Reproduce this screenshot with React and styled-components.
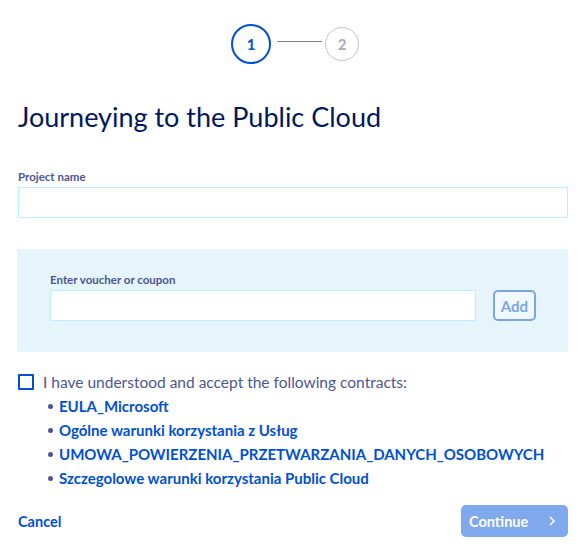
import React from "react";
import styled, { createGlobalStyle } from "styled-components";

const Global = createGlobalStyle`
  html, body { margin: 0; padding: 0; background: #fff; }
  body { font-family: Lato, "Noto Sans", sans-serif; }
  * { box-sizing: border-box; }
`;

const Page = styled.div`
  width: 578px;
  padding: 23px 10px 0 18px;
  display: flex;
  flex-direction: column;
`;

const Stepper = styled.div`
  display: flex;
  align-items: center;
  justify-content: center;
  padding-left: 4px;
  height: 41px;
`;

const Step = styled.div`
  width: ${(p) => (p.$active ? 40 : 34)}px;
  height: ${(p) => (p.$active ? 40 : 34)}px;
  border-radius: 50%;
  border: ${(p) => (p.$active ? "2px solid #0050d7" : "1px solid #c4c4c4")};
  color: ${(p) => (p.$active ? "#0050d7" : "#a9a9b8")};
  display: flex;
  align-items: center;
  justify-content: center;
  font-size: 15px;
  font-weight: 700;
`;

const StepLine = styled.div`
  width: 45px;
  height: 1px;
  background: #808080;
  margin: 0 3px 5px 6px;
`;

const Title = styled.h1`
  margin: 36px 0 0;
  font-size: 27px;
  font-weight: 400;
  color: #00185e;
  line-height: 34px;
`;

const Label = styled.label`
  display: block;
  font-size: 11.5px;
  font-weight: 700;
  color: #4d5693;
  line-height: 14px;
  margin-bottom: 3px;
`;

const Field = styled.div`
  margin-top: ${(p) => p.$mt || 0}px;
`;

const Input = styled.input`
  display: block;
  width: 100%;
  min-width: 0;
  flex: 1;
  height: 31px;
  border: 1px solid #bdf0fd;
  background: #fff;
  outline: none;
  padding: 0 8px;
  font-family: inherit;
`;

const Voucher = styled.div`
  margin-top: 31px;
  background: #e6f4fc;
  padding: 24px 32px 31px 33px;
  margin-left: -1px;
`;

const VoucherRow = styled.div`
  display: flex;
  align-items: flex-start;
  gap: 17px;
`;

const AddButton = styled.button`
  flex-shrink: 0;
  width: 43px;
  height: 31px;
  border: 2px solid #7aa6e8;
  border-radius: 5px;
  background: #f0f8fd;
  color: #7aa6e8;
  font-family: inherit;
  font-weight: 700;
  font-size: 15px;
  padding: 0;
`;

const Accept = styled.div`
  margin-top: 20px;
  display: flex;
  align-items: flex-start;
  gap: 9px;
`;

const Box = styled.span`
  width: 16px;
  height: 16px;
  border: 2px solid #0050d7;
  border-radius: 1px;
  margin-top: 2px;
  flex-shrink: 0;
`;

const AcceptBody = styled.div`
  display: flex;
  flex-direction: column;
`;

const AcceptText = styled.div`
  font-size: 15.5px;
  color: #4d5693;
  font-weight: 400;
  line-height: 20px;
`;

const List = styled.ul`
  margin: 2px 0 0;
  padding: 0 0 0 16px;
  list-style: none;
`;

const Item = styled.li`
  position: relative;
  line-height: 24px;
  font-size: 15px;
  font-weight: 700;
  color: #0050d7;
  &::before {
    content: "";
    position: absolute;
    left: -11px;
    top: 10px;
    width: 5px;
    height: 5px;
    border-radius: 50%;
    background: #4d5693;
  }
`;

const Footer = styled.div`
  margin-top: 15px;
  display: flex;
  align-items: center;
  justify-content: space-between;
`;

const Cancel = styled.a`
  font-size: 14.5px;
  font-weight: 700;
  color: #0050d7;
  text-decoration: none;
`;

const Continue = styled.button`
  width: 107px;
  height: 32px;
  border: none;
  border-radius: 5px;
  background: #80a8ec;
  color: #fff;
  font-family: inherit;
  font-size: 14.5px;
  font-weight: 700;
  display: flex;
  align-items: center;
  justify-content: space-between;
  padding: 0 12px 0 8px;
`;

export default function App() {
  return (
    <>
      <Global />
      <Page>
        <Stepper>
          <Step $active>1</Step>
          <StepLine />
          <Step>2</Step>
        </Stepper>
        <Title>Journeying to the Public Cloud</Title>
        <Field $mt={36}>
          <Label>Project name</Label>
          <Input />
        </Field>
        <Voucher>
          <Label>Enter voucher or coupon</Label>
          <VoucherRow>
            <Input />
            <AddButton>Add</AddButton>
          </VoucherRow>
        </Voucher>
        <Accept>
          <Box />
          <AcceptBody>
            <AcceptText>I have understood and accept the following contracts:</AcceptText>
            <List>
              <Item>EULA_Microsoft</Item>
              <Item>Ogólne warunki korzystania z Usług</Item>
              <Item>UMOWA_POWIERZENIA_PRZETWARZANIA_DANYCH_OSOBOWYCH</Item>
              <Item>Szczegolowe warunki korzystania Public Cloud</Item>
            </List>
          </AcceptBody>
        </Accept>
        <Footer>
          <Cancel href="#">Cancel</Cancel>
          <Continue>
            <span>Continue</span>
            <svg width="8" height="12" viewBox="0 0 8 12">
              <path d="M2 2l4 4-4 4" stroke="#fff" strokeWidth="1.6" fill="none" />
            </svg>
          </Continue>
        </Footer>
      </Page>
    </>
  );
}
